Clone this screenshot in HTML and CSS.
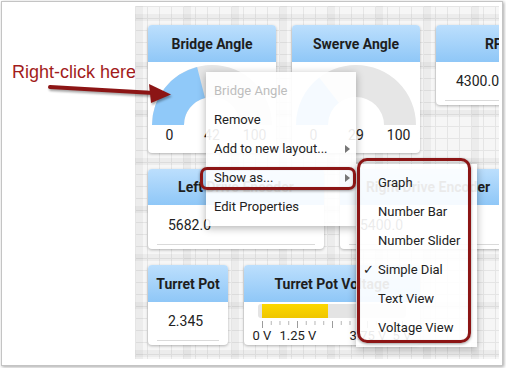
FILE: index.html
```html
<!DOCTYPE html>
<html lang="en">
<head>
    <meta charset="UTF-8">
    <title>Shuffleboard - Show as</title>
    <link rel="stylesheet" href="styles.css">
</head>
<body>
    <div class="frame">
        <div class="callout">Right-click here</div>

        <div class="dashboard">
            <div class="tile bridge">
                <div class="tile-head">Bridge Angle</div>
                <div class="dial">
                    <svg class="dial-arc" viewBox="0 0 128 64" width="128" height="64">
                        <path class="arc-bg" d="M4 63 A60 60 0 0 1 124 63 L92 63 A28 28 0 0 0 36 63 Z"/>
                        <path class="arc-fill" d="M4 63 A60 60 0 0 1 49.08 4.88 L57.04 35.88 A28 28 0 0 0 36 63 Z"/>
                    </svg>
                    <div class="dial-labels"><span>0</span><span>42</span><span>100</span></div>
                </div>
            </div>

            <div class="tile swerve">
                <div class="tile-head">Swerve Angle</div>
                <div class="dial">
                    <svg class="dial-arc" viewBox="0 0 128 64" width="128" height="64">
                        <path class="arc-bg" d="M4 63 A60 60 0 0 1 124 63 L92 63 A28 28 0 0 0 36 63 Z"/>
                        <path class="arc-fill" d="M4 63 A60 60 0 0 1 27.23 15.59 L46.84 40.87 A28 28 0 0 0 36 63 Z"/>
                    </svg>
                    <div class="dial-labels"><span>0</span><span>29</span><span>100</span></div>
                </div>
            </div>

            <div class="tile rpm">
                <div class="tile-head">RPM</div>
                <div class="number"><div class="field">4300.0</div></div>
            </div>

            <div class="tile left-drive">
                <div class="tile-head">Left Drive Encoder</div>
                <div class="number"><div class="field">5682.0</div></div>
            </div>

            <div class="tile right-drive">
                <div class="tile-head">Right Drive Encoder</div>
                <div class="number"><div class="field">5400.0</div></div>
            </div>

            <div class="tile turret">
                <div class="tile-head">Turret Pot</div>
                <div class="number"><div class="field">2.345</div></div>
            </div>

            <div class="tile voltage">
                <div class="tile-head">Turret Pot Voltage</div>
                <div class="volt">
                    <div class="track"><div class="track-fill" style="width: 46.9%"></div></div>
                    <div class="ticks"></div>
                    <div class="axis"><span>0 V</span><span>1.25 V</span><span></span><span>3.75 V</span><span>5 V</span></div>
                </div>
            </div>
        </div>
    </div>

    <!-- annotation arrow -->
    <svg class="pointer" width="180" height="110" viewBox="0 0 180 110">
        <line x1="50" y1="87" x2="154" y2="93" stroke="#8c1515" stroke-width="4" stroke-linecap="round"/>
        <polygon points="149,84 171,94.5 151,103" fill="#8c1515"/>
    </svg>

    <div class="menu context-menu">
        <div class="menu-item disabled">Bridge Angle</div>
        <div class="menu-item">Remove</div>
        <div class="menu-item">Add to new layout...<span class="caret"></span></div>
        <div class="menu-item">Show as...<span class="caret"></span></div>
        <div class="menu-item">Edit Properties</div>
    </div>

    <div class="menu sub-menu">
        <div class="menu-item">Graph</div>
        <div class="menu-item">Number Bar</div>
        <div class="menu-item">Number Slider</div>
        <div class="menu-item checked"><span class="check">✓</span>Simple Dial</div>
        <div class="menu-item">Text View</div>
        <div class="menu-item">Voltage View</div>
    </div>

    <div class="mark mark-show"></div>
    <div class="mark mark-sub"></div>
</body>
</html>
```

FILE: styles.css
```css
* {
    margin: 0;
    padding: 0;
    box-sizing: border-box;
}

body {
    background: #fff;
    font-family: Roboto, "Liberation Sans", sans-serif;
    color: #222;
    width: 506px;
    height: 368px;
    position: relative;
    overflow: hidden;
}

.frame {
    margin: 1px 0 0 1px;
    width: 502px;
    height: 365px;
    border: 1px solid #c4c4c4;
    box-shadow: 1px 1px 3px rgba(0, 0, 0, 0.35);
    display: flex;
    padding: 4px 3px 6px 0;
}

.callout {
    width: 133px;
    flex: none;
    padding: 55px 0 0 10px;
    font-family: "Liberation Sans", Arial, sans-serif;
    font-size: 18px;
    line-height: 22px;
    color: #a21c1c;
    white-space: nowrap;
}

/* dashboard canvas */
.dashboard {
    width: 364px;
    height: 353px;
    overflow: hidden;
    padding: 19px 0 0 13px;
    display: grid;
    grid-template-columns: repeat(9, 32px);
    grid-auto-rows: 32px;
    gap: 16px;
    background-color: #f6f6f6;
    background-image:
        linear-gradient(90deg, rgba(0, 0, 0, 0.04) 0 7px, transparent 7px),
        linear-gradient(rgba(0, 0, 0, 0.04) 0 7px, transparent 7px),
        linear-gradient(90deg, #e5e5e5 1px, transparent 1px),
        linear-gradient(#e5e5e5 1px, transparent 1px);
    background-size: 48px 48px, 48px 48px, 12px 12px, 12px 12px;
    background-position: 1px 0, 0 8px, 0 0, 0 0;
}

.tile {
    background: #fff;
    border-radius: 4px;
    box-shadow: 0 1px 3px rgba(0, 0, 0, 0.28);
    overflow: hidden;
    display: flex;
    flex-direction: column;
}

.bridge { grid-column: 1 / span 3; grid-row: 1 / span 3; }
.swerve { grid-column: 4 / span 3; grid-row: 1 / span 3; }
.rpm { grid-column: 7 / span 3; grid-row: 1 / span 2; }
.left-drive { grid-column: 1 / span 4; grid-row: 4 / span 2; }
.right-drive { grid-column: 5 / span 4; grid-row: 4 / span 2; }
.turret { grid-column: 1 / span 2; grid-row: 6 / span 2; }
.voltage { grid-column: 3 / span 4; grid-row: 6 / span 2; }

.tile-head {
    height: 37px;
    flex: none;
    background: linear-gradient(180deg, #bcdffd 0%, #8fc7f7 100%);
    display: flex;
    align-items: center;
    justify-content: center;
    font-weight: 700;
    font-size: 14px;
    white-space: nowrap;
    color: #1e1e1e;
}

.left-drive .tile-head,
.right-drive .tile-head {
    height: 36px;
}

/* simple dial */
.dial-arc {
    display: block;
}

.arc-bg {
    fill: #e6e6e6;
}

.arc-fill {
    fill: #90c9f9;
}

.dial-labels {
    display: grid;
    grid-template-columns: repeat(3, 1fr);
    text-align: center;
    font-size: 14px;
    line-height: 16px;
    margin-top: 1px;
}

/* number field */
.number {
    flex: 1;
    display: flex;
    flex-direction: column;
    justify-content: flex-end;
}

.field {
    margin: 0 9px 4px;
    padding: 0 11px 10px;
    border-bottom: 1px solid #dadada;
    font-size: 14px;
    line-height: 17px;
    white-space: nowrap;
}

/* voltage view */
.volt {
    padding: 2px 0 0 14px;
}

.track {
    width: 148px;
    height: 14px;
    padding: 0 4px;
    background: #e4e4e4;
    border-radius: 3px;
}

.track-fill {
    height: 100%;
    background: linear-gradient(180deg, #fdd800 0%, #efc600 100%);
}

.ticks {
    width: 141px;
    height: 7px;
    margin: 3px 0 0 4px;
    background:
        linear-gradient(90deg, #9c9c9c 1px, transparent 1px) 0 0 / 35px 7px repeat-x,
        linear-gradient(90deg, #b4b4b4 1px, transparent 1px) 0 0 / 8.75px 4px repeat-x;
}

.axis {
    display: grid;
    grid-template-columns: repeat(5, 35px);
    margin-left: -13.5px;
    font-size: 13px;
    line-height: 15px;
    text-align: center;
    white-space: nowrap;
}

/* overlays */
.pointer {
    position: absolute;
    left: 0;
    top: 0;
    filter: drop-shadow(1px 2px 1px rgba(0, 0, 0, 0.35));
}

.menu {
    position: absolute;
    background: rgba(255, 255, 255, 0.91);
    box-shadow: 0 2px 8px rgba(0, 0, 0, 0.3);
    font-size: 13px;
    padding: 4px 0 5px;
}

.context-menu {
    left: 206px;
    top: 72px;
    width: 150px;
}

.sub-menu {
    left: 356px;
    top: 164px;
    width: 121px;
}

.menu-item {
    height: 29px;
    display: flex;
    align-items: center;
    padding-left: 8px;
    color: #222;
    white-space: nowrap;
    position: relative;
}

.sub-menu .menu-item {
    padding-left: 22px;
}

.menu-item.disabled {
    color: #bdbdbd;
}

.caret {
    margin-left: auto;
    margin-right: 6px;
    border-left: 5px solid #777;
    border-top: 4px solid transparent;
    border-bottom: 4px solid transparent;
}

.check {
    position: absolute;
    left: 7px;
    font-family: "DejaVu Sans", sans-serif;
    font-size: 13px;
}

.mark {
    position: absolute;
    border: 3px solid #8c1515;
    box-shadow: 0 1px 3px rgba(0, 0, 0, 0.4), inset 0 0 1px rgba(0, 0, 0, 0.3);
}

.mark-show {
    left: 200px;
    top: 167px;
    width: 156px;
    height: 23px;
    border-radius: 7px;
}

.mark-sub {
    left: 357px;
    top: 158px;
    width: 114px;
    height: 185px;
    border-radius: 10px;
    border-width: 3.5px;
}
```
